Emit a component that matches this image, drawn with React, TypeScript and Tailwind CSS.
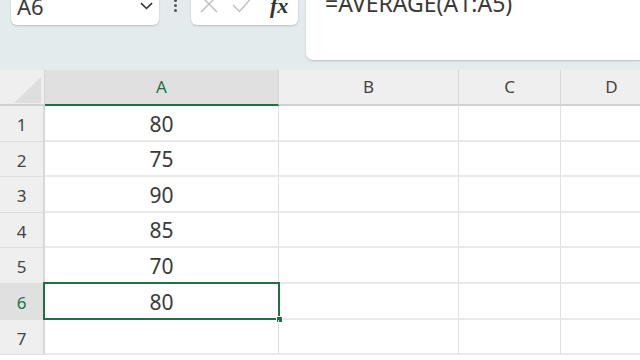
import React from 'react';

const font = { fontFamily: '"Noto Sans", "Liberation Sans", sans-serif' };

const columns = [
  { key: 'A', width: 'w-[234px]' },
  { key: 'B', width: 'w-[180px]' },
  { key: 'C', width: 'w-[102px]' },
  { key: 'D', width: 'w-[102px]' },
];

const values = ['80', '75', '90', '85', '70', '80', ''];

function Toolbar() {
  return (
    <div className="h-[70px] bg-[#e3ebec] flex items-start overflow-hidden">
      {/* name box */}
      <div className="ml-[11px] mt-[-15px] w-[148px] h-[40px] bg-white rounded-[6px] shadow-[0_1px_2px_rgba(0,0,0,0.18)] flex items-end justify-between pl-[6px] pr-[6px] pb-[5px]">
        <span className="text-[22px] leading-[28px] text-[#3a3a3a]">A6</span>
        <svg width="13" height="8" viewBox="0 0 13 8" className="mb-[10px]">
          <path d="M1 1.2 L6.5 6.5 L12 1.2" fill="none" stroke="#333" strokeWidth="1.6" />
        </svg>
      </div>
      {/* more dots */}
      <div className="w-[32px] flex flex-col items-center gap-[2px] mt-[-1px]">
        <span className="w-[3px] h-[3px] rounded-full bg-[#555]" />
        <span className="w-[3px] h-[3px] rounded-full bg-[#555]" />
        <span className="w-[3px] h-[3px] rounded-full bg-[#555]" />
      </div>
      {/* cancel / enter / fx */}
      <div className="mt-[-15px] w-[107px] h-[40px] bg-white rounded-[6px] shadow-[0_1px_2px_rgba(0,0,0,0.18)] flex items-end pb-[11px] pl-[8px]">
        <svg width="20" height="20" viewBox="0 0 20 20">
          <path d="M2 2 L18 18 M18 2 L2 18" stroke="#bdbdbd" strokeWidth="1.4" />
        </svg>
        <svg width="22" height="20" viewBox="0 0 22 20" className="ml-[13px]">
          <path d="M1 11 L7.5 17.5 L21 2" fill="none" stroke="#bdbdbd" strokeWidth="1.4" />
        </svg>
        <span
          className="ml-[16px] mb-[-4px] text-[22px] leading-[24px] italic font-bold text-[#333]"
          style={{ fontFamily: '"Liberation Serif", "DejaVu Serif", serif' }}
        >
          fx
        </span>
      </div>
      {/* formula bar */}
      <div className="ml-[8px] mt-[-15px] flex-1 h-[75px] bg-white rounded-bl-[7px] shadow-[0_1px_2px_rgba(0,0,0,0.18)] pl-[19px]">
        <div className="mt-[3px] text-[23px] leading-[30px] text-[#3a3a3a] whitespace-nowrap">=AVERAGE(A1:A5)</div>
      </div>
    </div>
  );
}

function HeaderRow() {
  return (
    <div className="flex h-[36px] bg-[#efefef]">
      <div className="w-[45px] shrink-0 border-r border-[#d6d6d6] border-b-2 border-b-[#d0d0d0] relative">
        <svg width="44" height="34" viewBox="0 0 44 34" className="absolute left-0 top-0">
          <path d="M14 33 L41 33 L41 7 Z" fill="#dedede" />
        </svg>
      </div>
      {columns.map((c) =>
        c.key === 'A' ? (
          <div
            key={c.key}
            className={`${c.width} shrink-0 bg-[#e0e0e0] border-r border-[#d6d6d6] border-b-2 border-b-[#1e7145] flex items-center justify-center text-[17px] text-[#1e7145]`}
          >
            {c.key}
          </div>
        ) : (
          <div
            key={c.key}
            className={`${c.width} shrink-0 border-r border-[#dadada] border-b-2 border-b-[#d0d0d0] flex items-center justify-center text-[17px] text-[#444]`}
          >
            {c.key}
          </div>
        )
      )}
    </div>
  );
}

function Row({ index, value }: { index: number; value: string }) {
  const selected = index === 6;
  return (
    <div className="flex h-[35.6px]">
      <div
        className={`w-[45px] shrink-0 border-r-2 border-[#d8d8d8] border-b border-b-[#dedede] flex items-center justify-center pt-[3px] text-[17px] ${
          selected ? 'bg-[#e0e0e0] text-[#1e7145]' : 'bg-[#efefef] text-[#444]'
        }`}
      >
        {index}
      </div>
      <div className="w-[234px] shrink-0 border-r border-[#e0e0e0] border-b-2 border-b-[#e9e9e9] flex items-center justify-center pt-[3px] text-[21px] text-[#3a3a3a] relative">
        {value}
        {selected && (
          <>
            <div className="absolute left-[-2px] top-[-2px] right-[-2px] bottom-[-2px] border-2 border-[#1e7145]" />
            <div className="absolute right-[-5px] bottom-[-5px] w-[7px] h-[7px] bg-[#1e7145] border border-white" />
          </>
        )}
      </div>
      <div className="w-[180px] shrink-0 border-r border-[#e0e0e0] border-b-2 border-b-[#e9e9e9]" />
      <div className="w-[102px] shrink-0 border-r border-[#e0e0e0] border-b-2 border-b-[#e9e9e9]" />
      <div className="w-[102px] shrink-0 border-r border-[#e0e0e0] border-b-2 border-b-[#e9e9e9]" />
    </div>
  );
}

export default function App() {
  return (
    <div className="w-[640px] h-[360px] overflow-hidden bg-white" style={font}>
      <Toolbar />
      <HeaderRow />
      {values.map((v, i) => (
        <Row key={i} index={i + 1} value={v} />
      ))}
    </div>
  );
}
